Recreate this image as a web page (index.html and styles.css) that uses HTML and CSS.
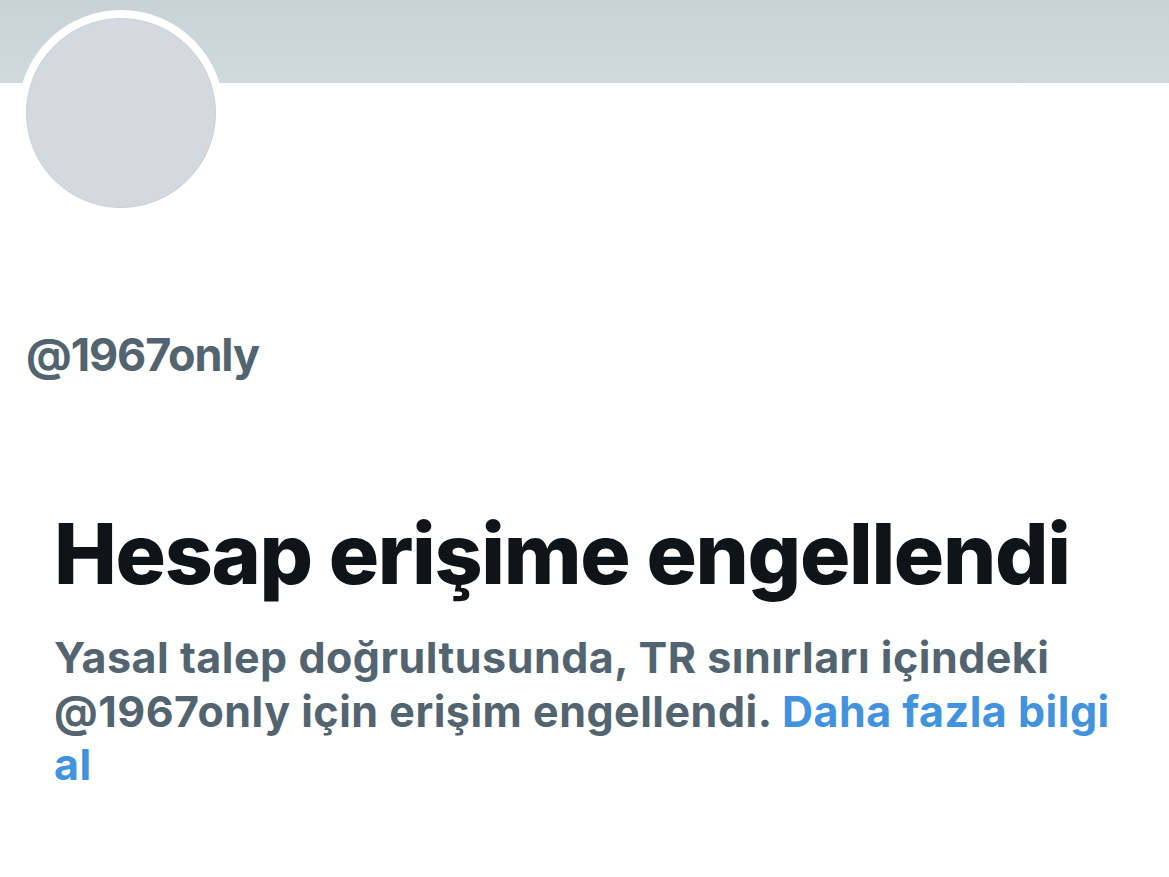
FILE: index.html
```html
<!DOCTYPE html>
<html lang="tr">
<head>
<meta charset="utf-8">
<title>@1967only</title>
<link rel="stylesheet" href="styles.css">
</head>
<body>
<div class="page">
  <div class="banner"></div>
  <div class="profile">
    <div class="avatar"><div class="avatar-inner"></div></div>
    <div class="handle">@1967only</div>
  </div>
  <div class="empty">
    <h1 class="empty-title">Hesap erişime engellendi</h1>
    <p class="empty-text">Yasal talep doğrultusunda, TR sınırları içindeki @1967only için erişim engellendi. <a class="link" href="#">Daha fazla bilgi al</a></p>
  </div>
</div>
</body>
</html>
```

FILE: styles.css
```css
html, body {
  margin: 0;
  padding: 0;
  background: #ffffff;
}
body {
  font-family: "Inter", "Roboto", "Liberation Sans", sans-serif;
}
.page {
  width: 1169px;
  min-height: 877px;
  overflow: hidden;
}
.banner {
  height: 83px;
  background: linear-gradient(180deg, #c9d2d6 0%, #d0d9dd 100%);
}
.profile {
  padding: 0 26px 0 18px;
}
.avatar {
  width: 190px;
  height: 190px;
  margin-top: -73px;
  border: 8px solid #ffffff;
  border-radius: 50%;
  background: #ffffff;
}
.avatar-inner {
  width: 188px;
  height: 188px;
  border-radius: 50%;
  background: #d3dadf;
  border: 1px solid #c8d1d6;
}
.handle {
  margin-top: 112px;
  padding-left: 8px;
  font-size: 45px;
  line-height: 54px;
  font-weight: 700;
  color: #536471;
  letter-spacing: -1.1px;
}
.empty {
  padding: 0 40px 0 54px;
  margin-top: 123px;
}
.empty-title {
  margin: 0;
  font-size: 84px;
  line-height: 97px;
  font-weight: 800;
  color: #0f1419;
  letter-spacing: -1.35px;
}
.empty-text {
  margin: 29px 0 0;
  font-size: 43px;
  line-height: 53.5px;
  font-weight: 700;
  color: #536471;
  letter-spacing: 0.5px;
}
.link {
  color: #4193de;
  text-decoration: none;
}
```
